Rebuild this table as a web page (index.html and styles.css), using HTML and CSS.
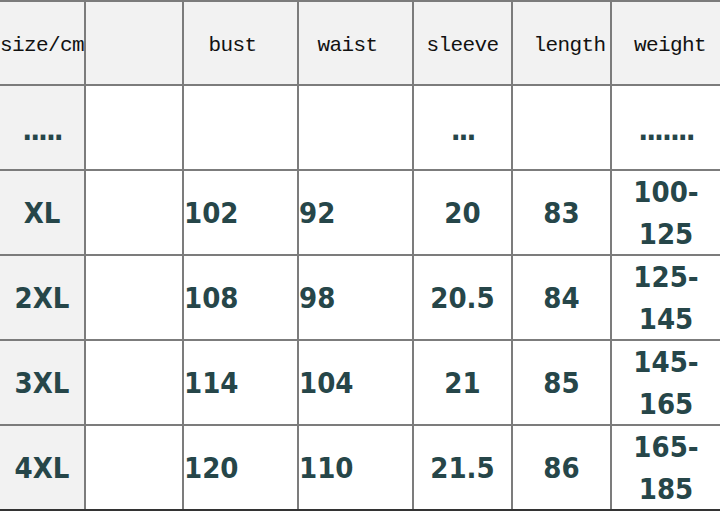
FILE: index.html
```html
<!DOCTYPE html>
<html>
<head>
<meta charset="utf-8">
<link rel="stylesheet" href="styles.css">
</head>
<body>
<div class="chart">
  <div class="cell head">size/cm</div>
  <div class="cell head"></div>
  <div class="cell head shift-l">bust</div>
  <div class="cell head shift-l">waist</div>
  <div class="cell head">sleeve</div>
  <div class="cell head shift-r">length</div>
  <div class="cell head shift-r2">weight</div>

  <div class="cell side dots">.....</div>
  <div class="cell"></div>
  <div class="cell"></div>
  <div class="cell"></div>
  <div class="cell dots">...</div>
  <div class="cell"></div>
  <div class="cell dots">.......</div>

  <div class="cell side">XL</div>
  <div class="cell"></div>
  <div class="cell left">102</div>
  <div class="cell left">92</div>
  <div class="cell">20</div>
  <div class="cell">83</div>
  <div class="cell two">100-<br>125</div>

  <div class="cell side">2XL</div>
  <div class="cell"></div>
  <div class="cell left">108</div>
  <div class="cell left">98</div>
  <div class="cell">20.5</div>
  <div class="cell">84</div>
  <div class="cell two">125-<br>145</div>

  <div class="cell side">3XL</div>
  <div class="cell"></div>
  <div class="cell left">114</div>
  <div class="cell left">104</div>
  <div class="cell">21</div>
  <div class="cell">85</div>
  <div class="cell two">145-<br>165</div>

  <div class="cell side">4XL</div>
  <div class="cell"></div>
  <div class="cell left">120</div>
  <div class="cell left">110</div>
  <div class="cell">21.5</div>
  <div class="cell">86</div>
  <div class="cell two">165-<br>185</div>
</div>
</body>
</html>
```
FILE: styles.css
```css
html, body {
  margin: 0;
  padding: 0;
  background: #ffffff;
  width: 720px;
  height: 512px;
  overflow: hidden;
}

.chart {
  display: grid;
  grid-template-columns: 84px 96px 113px 113px 97px 97px 108px;
  grid-template-rows: 82px repeat(5, 83px);
  gap: 2px;
  background: #7c7c7c;
  border-top: 2px solid #7c7c7c;
  border-bottom: 2px solid #333333;
  width: 720px;
}

.cell {
  background: #ffffff;
  display: flex;
  align-items: center;
  justify-content: center;
  text-align: center;
  font-family: "DejaVu Sans Condensed", "DejaVu Sans", sans-serif;
  font-stretch: condensed;
  font-weight: bold;
  font-size: 29px;
  color: #264649;
  white-space: nowrap;
  overflow: hidden;
}

.head {
  background: #f2f2f2;
  font-family: "Liberation Mono", "DejaVu Sans Mono", monospace;
  font-stretch: normal;
  font-weight: normal;
  font-size: 21px;
  letter-spacing: -0.6px;
  color: #111111;
  padding-top: 4px;
}

.shift-l {
  padding-right: 16px;
}

.shift-r {
  padding-left: 16px;
}

.shift-r2 {
  padding-left: 8px;
}

.side {
  background: #f2f2f2;
}

.left {
  justify-content: flex-start;
}

.dots {
  letter-spacing: -2px;
  padding-top: 4px;
}

.two {
  line-height: 42px;
}
```
